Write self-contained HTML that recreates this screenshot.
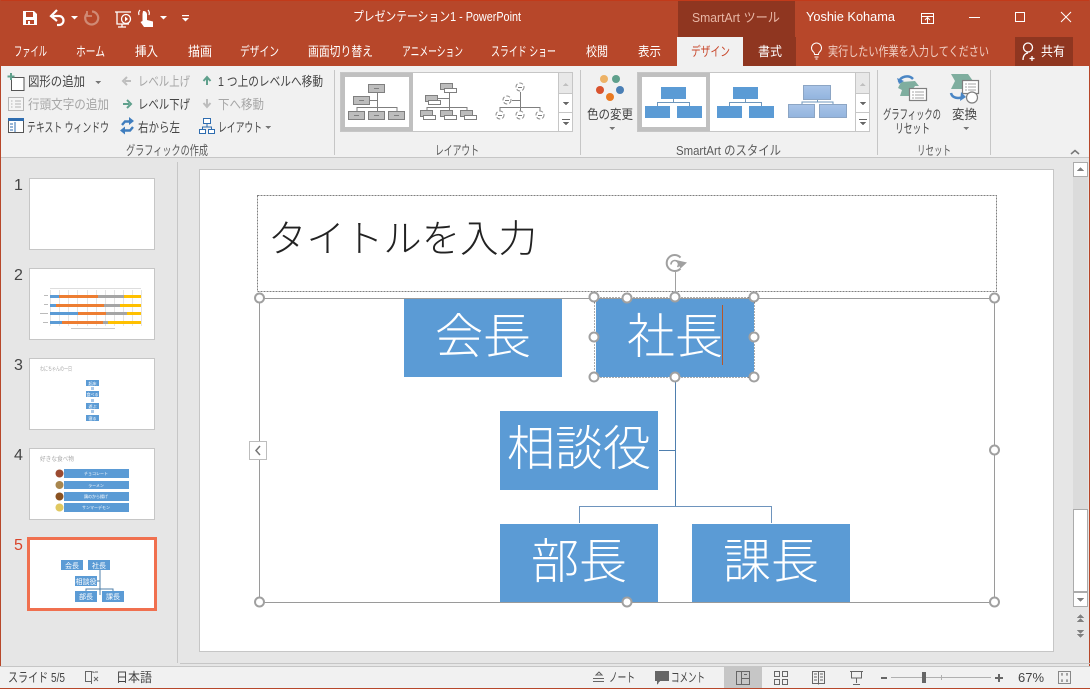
<!DOCTYPE html>
<html lang="ja"><head><meta charset="utf-8"><title>PowerPoint</title>
<style>
html,body{margin:0;padding:0;width:1090px;height:689px;overflow:hidden;background:#E6E6E6}
svg{display:block;position:absolute;left:0;top:0}
text{font-family:"Liberation Sans","Noto Sans CJK JP",sans-serif;font-size:13px;fill:#444;white-space:pre}
.w{fill:#fff}
.d{fill:#A6A6A6}
.bx{fill:#BDBDBD;stroke:#7F7F7F;stroke-width:1}
.wb{fill:#fff;stroke:#7F7F7F;stroke-width:1}
.ln{stroke:#7F7F7F;stroke-width:1;fill:none}
.s{fill:#5B9BD5}
.big{font-size:48px;fill:#fff;text-anchor:middle}
.h{fill:#fff;stroke:#A0A0A0;stroke-width:2}
.c{fill:none;stroke:#8C8C8C;stroke-width:1}
.tb{fill:#fff;stroke:#C6C6C6;stroke-width:1}
.n{font-size:16px;fill:#444}
.tiny{font-size:4px;fill:#fff;text-anchor:middle}
.g{fill:#808080}
.lb{fill:#5A5A5A}
</style></head><body>
<svg width="1090" height="689" viewBox="0 0 1090 689" xmlns="http://www.w3.org/2000/svg" shape-rendering="crispEdges">
<!-- base -->
<rect width="1090" height="689" fill="#E6E6E6"/>
<rect width="1090" height="66" fill="#B7472A"/>
<rect y="0" width="1090" height="1" fill="#C23A1A"/>
<rect y="66" width="1090" height="91" fill="#F1F1F1"/>
<rect y="157" width="1090" height="1" fill="#C6C6C6"/>
<rect x="0" y="0" width="1" height="689" fill="#B7472A"/>
<rect x="1089" y="0" width="1" height="689" fill="#B7472A"/>
<rect y="688" width="1090" height="1" fill="#B7472A"/>

<!-- title bar -->
<rect x="678" y="1" width="117" height="36" fill="#8F3620"/>
<g shape-rendering="auto">
<path fill="#fff" d="M23 11h11l3 3v11H23zM26 12v5h7v-5zM26 20v4h8v-4zM28 21h2v3h-2z" fill-rule="evenodd"/>
<path d="M53 16h6a4.500 4.500 0 0 1 0 9h-2" fill="none" stroke="#fff" stroke-width="2.200"/>
<path d="M57 10l-6 6 6 5" fill="none" stroke="#fff" stroke-width="2.200"/>
<path fill="#fff" d="M71 16h7l-3.500 3.500z"/>
<path d="M92 11.500a6.500 6.500 0 1 1-5 2" fill="none" stroke="#D08A75" stroke-width="2.200"/>
<path d="M87 11v5h5" fill="none" stroke="#D08A75" stroke-width="1.800"/>
<path d="M115 12h16M117 12v12h12M122 24v3M118 27h8" fill="none" stroke="#fff" stroke-width="1.300"/>
<circle cx="126" cy="19" r="4.500" fill="#B7472A" stroke="#fff" stroke-width="1.300"/>
<path fill="#fff" d="M125 16.500l3 2.500-3 2.500z"/>
<path fill="#fff" d="M143 11a3.500 3.500 0 0 1 4 3v6l6 1.500v5.500h-9l-3.500-5 2-1v-7z"/>
<path d="M139 15a5 5 0 0 1 1-5M149 15a5 5 0 0 0-1-5" fill="none" stroke="#fff" stroke-width="1.200"/>
<path fill="#fff" d="M160 16h7l-3.500 3.500z"/>
<rect x="182" y="15" width="7" height="1.200" fill="#fff"/>
<path fill="#fff" d="M182 18h7l-3.500 3.500z"/>
<path d="M921.500 13.500h12v10h-12zM921.500 16.500h12M927.500 23v-5M925 20l2.500-2.500 2.500 2.500" fill="none" stroke="#fff" stroke-width="1"/>
<path d="M1061 12l10 10M1071 12l-10 10" stroke="#fff" stroke-width="1" fill="none"/>
</g>
<rect x="969" y="17" width="11" height="1" fill="#fff"/>
<rect x="1015.500" y="12.500" width="9" height="9" fill="none" stroke="#fff"/>
<text class="w" x="353" y="21" textLength="168" lengthAdjust="spacingAndGlyphs">プレゼンテーション1 - PowerPoint</text>
<text x="692" y="22" textLength="88" lengthAdjust="spacingAndGlyphs" style="fill:#E8B7A6">SmartArt ツール</text>
<text class="w" x="806" y="21" textLength="89" lengthAdjust="spacingAndGlyphs">Yoshie Kohama</text>

<!-- tabs -->
<rect x="677" y="37" width="66" height="29" fill="#F1F1F1"/>
<rect x="743" y="37" width="53" height="29" fill="#8F3620"/>
<rect x="1015" y="37" width="58" height="29" fill="#8F3620"/>
<text class="w" x="14" y="56" textLength="33" lengthAdjust="spacingAndGlyphs">ファイル</text>
<text class="w" x="76" y="56" textLength="29" lengthAdjust="spacingAndGlyphs">ホーム</text>
<text class="w" x="135" y="56" textLength="23" lengthAdjust="spacingAndGlyphs">挿入</text>
<text class="w" x="188" y="56" textLength="24" lengthAdjust="spacingAndGlyphs">描画</text>
<text class="w" x="240" y="56" textLength="39" lengthAdjust="spacingAndGlyphs">デザイン</text>
<text class="w" x="308" y="56" textLength="65" lengthAdjust="spacingAndGlyphs">画面切り替え</text>
<text class="w" x="402" y="56" textLength="61" lengthAdjust="spacingAndGlyphs">アニメーション</text>
<text class="w" x="491" y="56" textLength="65" lengthAdjust="spacingAndGlyphs">スライド ショー</text>
<text class="w" x="586" y="56" textLength="22" lengthAdjust="spacingAndGlyphs">校閲</text>
<text class="w" x="638" y="56" textLength="23" lengthAdjust="spacingAndGlyphs">表示</text>
<text x="691" y="56" textLength="39" lengthAdjust="spacingAndGlyphs" style="fill:#C8462A">デザイン</text>
<text class="w" x="758" y="56" textLength="24" lengthAdjust="spacingAndGlyphs">書式</text>
<text x="828" y="56" textLength="161" lengthAdjust="spacingAndGlyphs" style="fill:#F0CFC4">実行したい作業を入力してください</text>
<text class="w" x="1041" y="56" textLength="24" lengthAdjust="spacingAndGlyphs">共有</text>
<g shape-rendering="auto" fill="none" stroke="#fff">
<path d="M813.500 52a5 5 0 1 1 6 0c-.8.7-1 1.500-1 2.500h-4c0-1-.2-1.800-1-2.500zM814.500 57h4M815.500 59h2"/>
<circle cx="1028" cy="47.500" r="4.500" stroke-width="1.300"/>
<path d="M1023 60c0-4 2-6.500 5-7M1032 56v5M1029.500 58.500h5" stroke-width="1.300"/>
</g>

<!-- group 1 -->
<g shape-rendering="auto">
<path d="M11.500 77.500h12.500v13H11.500z" fill="#fff" stroke="#555"/>
<path d="M11 73v7M7.500 76.500h7" stroke="#5FA08C" stroke-width="2"/>
<rect x="8.500" y="97.500" width="15" height="13" fill="#F5F5F5" stroke="#B5B5B5"/>
<path d="M11 101h1.500M11 104h1.500M11 107h1.500M15 101h6M15 104h6M15 107h6" stroke="#B5B5B5"/>
<rect x="8.500" y="119.500" width="15" height="13" fill="#fff" stroke="#555"/>
<rect x="8" y="118" width="16" height="3" fill="#2F6DB0"/>
<path d="M10 124h3M10 127h3M10 130h3M15 122v10" stroke="#2F6DB0"/>
<path d="M131 81h-6M127 77l-4 4 4 4" stroke="#BDBDBD" stroke-width="2" fill="none"/>
<path d="M123 104h6M127 100l4 4-4 4" stroke="#5FA08C" stroke-width="2" fill="none"/>
<path d="M122 125l3-3.500h6" stroke="#3F7DBE" stroke-width="2.400" fill="none"/>
<path d="M129 117l5 4-5 4z" fill="#3F7DBE"/>
<path d="M133 127l-3 3.500h-6" stroke="#3F7DBE" stroke-width="2.400" fill="none"/>
<path d="M125 126.500l-5 4 5 4z" fill="#3F7DBE"/>
<path d="M207 85v-7M203.500 81l3.500-4 3.500 4" stroke="#5FA08C" stroke-width="2" fill="none"/>
<path d="M207 99v7M203.500 103l3.500 4 3.500-4" stroke="#BDBDBD" stroke-width="2" fill="none"/>
</g>
<rect x="203.500" y="118.500" width="7" height="5" fill="#fff" stroke="#2F6DB0"/>
<rect x="199.500" y="129.500" width="6" height="4" fill="#fff" stroke="#2F6DB0"/>
<rect x="208.500" y="129.500" width="6" height="4" fill="#fff" stroke="#2F6DB0"/>
<path d="M207 124v3M202.500 129v-2h9v2" fill="none" stroke="#2F6DB0"/>
<text x="28" y="86" textLength="57" lengthAdjust="spacingAndGlyphs">図形の追加</text>
<path d="M95 81h6l-3 3z" fill="#777"/>
<text class="d" x="28" y="109" textLength="81" lengthAdjust="spacingAndGlyphs">行頭文字の追加</text>
<text x="27" y="132" textLength="82" lengthAdjust="spacingAndGlyphs">テキスト ウィンドウ</text>
<text class="d" x="138" y="86" textLength="52" lengthAdjust="spacingAndGlyphs">レベル上げ</text>
<text x="138" y="109" textLength="52" lengthAdjust="spacingAndGlyphs">レベル下げ</text>
<text x="138" y="132" textLength="42" lengthAdjust="spacingAndGlyphs">右から左</text>
<text x="218" y="86" textLength="105" lengthAdjust="spacingAndGlyphs">1 つ上のレベルへ移動</text>
<text class="d" x="218" y="109" textLength="46" lengthAdjust="spacingAndGlyphs">下へ移動</text>
<text x="218" y="132" textLength="44" lengthAdjust="spacingAndGlyphs">レイアウト</text>
<path d="M265 126h6l-3 3z" fill="#777"/>
<text class="lb" x="126" y="155" textLength="82" lengthAdjust="spacingAndGlyphs">グラフィックの作成</text>

<!-- separators -->
<rect x="334" y="70" width="1" height="85" fill="#C6C6C6"/>
<rect x="580" y="70" width="1" height="85" fill="#C6C6C6"/>
<rect x="877" y="70" width="1" height="85" fill="#C6C6C6"/>
<rect x="990" y="70" width="1" height="85" fill="#C6C6C6"/>

<!-- layout gallery -->
<rect x="340.500" y="72.500" width="232" height="59" fill="#fff" stroke="#C6C6C6"/>
<rect x="343" y="75" width="68" height="54" fill="#fff" stroke="#C0C0C0" stroke-width="4"/>
<path class="ln" d="M377.500 92v19M357 111v-3.500h40v3.500M370 100.500h7.500"/>
<rect class="bx" x="368.500" y="84.500" width="16" height="8"/>
<rect class="bx" x="353.500" y="96.500" width="16" height="8"/>
<rect class="bx" x="348.500" y="111.500" width="16" height="8"/>
<rect class="bx" x="368.500" y="111.500" width="16" height="8"/>
<rect class="bx" x="388.500" y="111.500" width="16" height="8"/>
<path class="ln" d="M374 88.500h5M359 100.500h5M354 115.500h5M374 115.500h5M394 115.500h5"/>
<path class="ln" d="M449.500 92v18M427 110v-2.500h40v2.500M438 98.500h11"/>
<rect class="bx" x="440.500" y="83.500" width="12" height="6"/><rect class="wb" x="444.500" y="88.500" width="12" height="4"/>
<rect class="bx" x="425.500" y="95.500" width="12" height="6"/><rect class="wb" x="428.500" y="100.500" width="12" height="4"/>
<rect class="bx" x="420.500" y="110.500" width="12" height="6"/><rect class="wb" x="423.500" y="115.500" width="12" height="4"/>
<rect class="bx" x="440.500" y="110.500" width="12" height="6"/><rect class="wb" x="444.500" y="115.500" width="12" height="4"/>
<rect class="bx" x="460.500" y="110.500" width="12" height="6"/><rect class="wb" x="464.500" y="115.500" width="12" height="4"/>
<path class="ln" d="M520.500 92v19M500 111v-3.500h40v3.500M512 100.500h8"/>
<g shape-rendering="auto">
<circle class="c" cx="520" cy="87" r="4" stroke-dasharray="4 2"/><circle class="c" cx="507" cy="100" r="4" stroke-dasharray="4 2"/>
<circle class="c" cx="500" cy="115" r="4" stroke-dasharray="4 2"/><circle class="c" cx="520" cy="115" r="4" stroke-dasharray="4 2"/><circle class="c" cx="540" cy="115" r="4" stroke-dasharray="4 2"/>
</g>
<path class="ln" d="M518 87.500h4M505 100.500h4M498 115.500h4M518 115.500h4M538 115.500h4"/>
<!-- scroll 1 -->
<rect x="558.500" y="72.500" width="14" height="59" fill="#fff" stroke="#C6C6C6"/>
<rect x="559" y="73" width="13" height="20" fill="#E8E8E8"/>
<path d="M558 93.500h15M558 112.500h15" stroke="#C6C6C6"/>
<path d="M562.500 86h6l-3-3z" fill="#C0C0C0"/>
<path d="M562.500 102h7l-3.500 3z" fill="#666"/>
<path d="M562 119.500h8" stroke="#666"/><path d="M562.500 122h7l-3.500 3z" fill="#666"/>
<text class="lb" x="435" y="155" textLength="44" lengthAdjust="spacingAndGlyphs">レイアウト</text>

<!-- color -->
<g shape-rendering="auto">
<circle cx="604" cy="79" r="4" fill="#EDB266"/><circle cx="616" cy="79" r="4" fill="#5FA08C"/>
<circle cx="600" cy="90" r="4" fill="#D9532F"/><circle cx="620" cy="90" r="4" fill="#4A7FB5"/>
<circle cx="610" cy="97" r="4" fill="#E97A22"/>
</g>
<text x="587" y="119" textLength="46" lengthAdjust="spacingAndGlyphs">色の変更</text>
<path d="M609 127h6l-3 3z" fill="#777"/>

<!-- style gallery -->
<rect x="637.500" y="72.500" width="232" height="59" fill="#fff" stroke="#C6C6C6"/>
<rect x="640" y="75" width="68" height="54" fill="#fff" stroke="#C0C0C0" stroke-width="4"/>
<path d="M673.500 99v4M657.500 106v-3.500h32v3.500" fill="none" stroke="#6F97BC"/>
<rect x="661" y="87" width="25" height="12" fill="#5B9BD5"/>
<rect x="645" y="106" width="25" height="12" fill="#5B9BD5"/>
<rect x="677" y="106" width="25" height="12" fill="#5B9BD5"/>
<path d="M745.500 99v4M729.500 106v-3.500h32v3.500" fill="none" stroke="#6F97BC"/>
<rect x="733" y="87" width="25" height="12" fill="#5B9BD5"/>
<rect x="717" y="106" width="25" height="12" fill="#5B9BD5"/>
<rect x="749" y="106" width="25" height="12" fill="#5B9BD5"/>
<defs><linearGradient id="gr" x1="0" y1="0" x2="0" y2="1"><stop offset="0" stop-color="#A9C4E8"/><stop offset="1" stop-color="#92B4DE"/></linearGradient></defs>
<path d="M817.500 100v2M802 104v-2h31v2" fill="none" stroke="#6F97BC"/>
<rect x="803.500" y="85.500" width="27" height="14" fill="url(#gr)" stroke="#8CA5C4"/>
<rect x="788.500" y="104.500" width="26" height="13" fill="url(#gr)" stroke="#8CA5C4"/>
<rect x="819.500" y="104.500" width="27" height="13" fill="url(#gr)" stroke="#8CA5C4"/>
<rect x="855.500" y="72.500" width="14" height="59" fill="#fff" stroke="#C6C6C6"/>
<rect x="856" y="73" width="13" height="20" fill="#E8E8E8"/>
<path d="M855 93.500h15M855 112.500h15" stroke="#C6C6C6"/>
<path d="M859.500 86h6l-3-3z" fill="#C0C0C0"/>
<path d="M859.500 102h7l-3.500 3z" fill="#666"/>
<path d="M859 119.500h8" stroke="#666"/><path d="M859.500 122h7l-3.500 3z" fill="#666"/>
<text class="lb" x="676" y="155" textLength="105" lengthAdjust="spacingAndGlyphs">SmartArt のスタイル</text>

<!-- reset group -->
<g shape-rendering="auto">
<path d="M898 88l3-6 14-1 4 5-4 0 0 0-2 3-3 0-1 7h-9l2-6z" fill="#7FAE9F"/>
<path d="M899 82a8 7 0 0 1 14-3" fill="none" stroke="#4A86C5" stroke-width="2.500"/>
<path d="M897 78l2 6 5-3z" fill="#4A86C5"/>
<rect x="909.500" y="88.500" width="17" height="12" fill="#fff" stroke="#7F7F7F" stroke-width="1.200"/>
<path d="M912 92h2M915 92h9M912 95h2M915 95h9M912 98h2M915 98h9" stroke="#A6A6A6"/>
<path d="M951 74h17l5 7-4 8h-18l4-8z" fill="#7FAE9F"/>
<rect x="962.500" y="80.500" width="16" height="13" fill="#fff" stroke="#7F7F7F" stroke-width="1.200"/>
<path d="M965 84h2M968 84h8M965 87h2M968 87h8M965 90h2M968 90h8" stroke="#A6A6A6"/>
<path d="M951 93c1 5 7 6 12 4" fill="none" stroke="#4A86C5" stroke-width="2.500"/>
<path d="M961 92l5 5-6 4z" fill="#4A86C5"/>
<circle cx="972" cy="97.500" r="5.500" fill="#fff" stroke="#7F7F7F" stroke-width="1.200"/>
</g>
<text x="883" y="119" textLength="58" lengthAdjust="spacingAndGlyphs">グラフィックの</text>
<text x="895" y="133" textLength="35" lengthAdjust="spacingAndGlyphs">リセット</text>
<text x="952" y="119" textLength="25" lengthAdjust="spacingAndGlyphs">変換</text>
<path d="M963 127h6l-3 3z" fill="#777"/>
<text class="lb" x="917" y="155" textLength="34" lengthAdjust="spacingAndGlyphs">リセット</text>
<path d="M1071 154l4-3.500 4 3.500" fill="none" stroke="#777" stroke-width="1.500" shape-rendering="auto"/>

<!-- thumbnail panel -->
<rect x="177" y="162" width="1" height="501" fill="#C6C6C6"/>
<rect x="180" y="663" width="910" height="1" fill="#C6C6C6"/>
<rect x="29.500" y="178.500" width="125" height="71" class="tb"/>
<rect x="29.500" y="268.500" width="125" height="71" class="tb"/>
<rect x="29.500" y="358.500" width="125" height="71" class="tb"/>
<rect x="29.500" y="448.500" width="125" height="71" class="tb"/>
<rect x="28.500" y="538.500" width="127" height="71" fill="#fff" stroke="#F0704F" stroke-width="3"/>
<text class="n" x="14" y="190">1</text>
<text class="n" x="14" y="280">2</text>
<text class="n" x="14" y="370">3</text>
<text class="n" x="14" y="460">4</text>
<text class="n" x="14" y="550" style="fill:#D9442A">5</text>

<!-- thumb 2 -->
<g fill="#E4E4E4"><rect x="50" y="290" width="1" height="36"/><rect x="59" y="290" width="1" height="36"/><rect x="68" y="290" width="1" height="36"/><rect x="77" y="290" width="1" height="36"/><rect x="87" y="290" width="1" height="36"/><rect x="96" y="290" width="1" height="36"/><rect x="105" y="290" width="1" height="36"/><rect x="114" y="290" width="1" height="36"/><rect x="123" y="290" width="1" height="36"/><rect x="132" y="290" width="1" height="36"/><rect x="141" y="290" width="1" height="36"/></g>
<rect x="50" y="295" width="9" height="3" fill="#5B9BD5"/><rect x="59" y="295" width="39" height="3" fill="#ED7D31"/><rect x="98" y="295" width="26" height="3" fill="#A5A5A5"/><rect x="124" y="295" width="17" height="3" fill="#FFC000"/>
<rect x="50" y="304" width="6" height="3" fill="#5B9BD5"/><rect x="56" y="304" width="48" height="3" fill="#ED7D31"/><rect x="104" y="304" width="16" height="3" fill="#A5A5A5"/><rect x="120" y="304" width="21" height="3" fill="#FFC000"/>
<rect x="50" y="312" width="28" height="3" fill="#5B9BD5"/><rect x="78" y="312" width="28" height="3" fill="#ED7D31"/><rect x="106" y="312" width="21" height="3" fill="#A5A5A5"/><rect x="127" y="312" width="14" height="3" fill="#FFC000"/>
<rect x="50" y="321" width="12" height="3" fill="#5B9BD5"/><rect x="62" y="321" width="41" height="3" fill="#ED7D31"/><rect x="103" y="321" width="5" height="3" fill="#A5A5A5"/><rect x="108" y="321" width="33" height="3" fill="#FFC000"/>
<rect x="71" y="328" width="44" height="1" fill="#C9C9C9"/>
<rect x="44" y="295" width="4" height="1" fill="#BBB"/><rect x="44" y="304" width="4" height="1" fill="#BBB"/><rect x="40" y="313" width="8" height="1" fill="#BBB"/><rect x="43" y="322" width="5" height="1" fill="#BBB"/>
<rect x="50" y="288" width="91" height="1" fill="#DDD"/>

<!-- thumb 3 -->
<text x="40" y="371" textLength="32" lengthAdjust="spacingAndGlyphs" style="font-size:6px;fill:#A8A8A8">わにちゃんの一日</text>
<rect x="86" y="380" width="13" height="6" class="s"/><rect x="86" y="391" width="13" height="6" class="s"/><rect x="86" y="403" width="13" height="6" class="s"/><rect x="86" y="415" width="13" height="6" class="s"/>
<g fill="#A9C8E8"><rect x="91" y="387" width="3" height="3"/><rect x="91" y="399" width="3" height="3"/><rect x="91" y="410" width="3" height="3"/></g>
<text class="tiny" x="92.500" y="385">起床</text><text class="tiny" x="92.500" y="396">食べる</text><text class="tiny" x="92.500" y="408">遊ぶ</text><text class="tiny" x="92.500" y="420">寝る</text>

<!-- thumb 4 -->
<text x="40" y="461" textLength="34" lengthAdjust="spacingAndGlyphs" style="font-size:6px;fill:#A8A8A8">好きな食べ物</text>
<rect x="64" y="469" width="65" height="9" class="s"/><rect x="64" y="481" width="65" height="8" class="s"/><rect x="64" y="492" width="65" height="9" class="s"/><rect x="64" y="503" width="65" height="9" class="s"/>
<text class="tiny" x="96" y="475">チョコレート</text><text class="tiny" x="96" y="487">ラーメン</text><text class="tiny" x="96" y="498">鶏のから揚げ</text><text class="tiny" x="96" y="509">サンマーデモン</text>
<g shape-rendering="auto"><circle cx="59.500" cy="473.500" r="4" fill="#9B4A30"/><circle cx="59.500" cy="485" r="4" fill="#A8864E"/><circle cx="59.500" cy="496.500" r="4" fill="#8A5220"/><circle cx="59.500" cy="507.500" r="4" fill="#E0C860"/></g>

<!-- thumb 5 -->
<rect x="61" y="560" width="22" height="10" class="s"/><rect x="88" y="560" width="22" height="10" class="s"/>
<rect x="75" y="576" width="22" height="10" class="s"/><rect x="75" y="591" width="22" height="11" class="s"/><rect x="102" y="591" width="22" height="11" class="s"/>
<path d="M100 570v25M97 581h3M86 591v-2h27v2" fill="none" stroke="#4F7FA8"/>
<text x="72" y="568" text-anchor="middle" style="font-size:7px;fill:#fff">会長</text>
<text x="99" y="568" text-anchor="middle" style="font-size:7px;fill:#fff">社長</text>
<text x="86" y="584" text-anchor="middle" style="font-size:7px;fill:#fff">相談役</text>
<text x="86" y="599" text-anchor="middle" style="font-size:7px;fill:#fff">部長</text>
<text x="113" y="599" text-anchor="middle" style="font-size:7px;fill:#fff">課長</text>

<!-- slide -->
<rect x="199.500" y="169.500" width="854" height="482" fill="#fff" stroke="#C6C6C6"/>
<rect x="257.500" y="195.500" width="739" height="96" fill="none" stroke="#7F7F7F" stroke-dasharray="2 1"/>
<text x="268" y="252" textLength="269" lengthAdjust="spacingAndGlyphs" style="font-size:38px;font-weight:300;fill:#222">タイトルを入力</text>

<rect x="259.500" y="298.500" width="735" height="304" fill="none" stroke="#9A9A9A"/>
<rect x="404" y="299" width="158" height="78" class="s"/>
<rect x="596" y="299" width="158" height="78" class="s"/>
<rect x="500" y="411" width="158" height="79" class="s"/>
<rect x="500" y="524" width="158" height="78" class="s"/>
<rect x="692" y="524" width="158" height="78" class="s"/>
<path d="M675.500 377v130M659 450.500h16.500" fill="none" stroke="#4F7FAE"/>
<path d="M579.500 523v-16.500h192v16.500" fill="none" stroke="#6E94BD"/>
<text class="big" x="483" y="353" style="font-weight:300">会長</text>
<text class="big" x="675" y="353" style="font-weight:300">社長</text>
<text class="big" x="579" y="465" style="font-weight:300">相談役</text>
<text class="big" x="579" y="578" style="font-weight:300">部長</text>
<text class="big" x="771" y="578" style="font-weight:300">課長</text>
<rect x="722" y="305" width="1" height="60" fill="#B7572A"/>
<rect x="594.500" y="297.500" width="160" height="80" fill="none" stroke="#fff"/>
<rect x="594.500" y="297.500" width="160" height="80" fill="none" stroke="#5A5A5A" stroke-dasharray="1 2"/>
<rect x="675" y="272" width="1" height="25" fill="#A0A0A0"/>

<g shape-rendering="auto">
<path d="M680.500 257.500a8 8 0 1 0 0 11" fill="none" stroke="#A0A0A0" stroke-width="2"/>
<path d="M671 264.500a3.800 3.800 0 1 1 6.500 2.500" fill="none" stroke="#A0A0A0" stroke-width="1.600"/>
<path d="M676 260l11 2.500-6.500 6z" fill="#A0A0A0"/>
<circle class="h" cx="259.500" cy="298" r="4.500"/><circle class="h" cx="994.500" cy="298" r="4.500"/>
<circle class="h" cx="994.500" cy="450" r="4.500"/>
<circle class="h" cx="259.500" cy="602" r="4.500"/><circle class="h" cx="627" cy="602" r="4.500"/><circle class="h" cx="994.500" cy="602" r="4.500"/>
<circle class="h" cx="594" cy="297" r="4.500"/><circle class="h" cx="627" cy="298" r="4.500"/><circle class="h" cx="675" cy="297" r="4.500"/><circle class="h" cx="754" cy="297" r="4.500"/>
<circle class="h" cx="594" cy="337" r="4.500"/><circle class="h" cx="754" cy="337" r="4.500"/>
<circle class="h" cx="594" cy="377" r="4.500"/><circle class="h" cx="675" cy="377" r="4.500"/><circle class="h" cx="754" cy="377" r="4.500"/>
</g>
<rect x="249.500" y="441.500" width="17" height="18" fill="#fff" stroke="#BDBDBD"/>
<path d="M260 446l-4 4.500 4 4.500" fill="none" stroke="#777" stroke-width="1.500" shape-rendering="auto"/>

<!-- scrollbar -->
<rect x="1073" y="162" width="15" height="445" fill="#DBDBDB"/>
<rect x="1073.500" y="162.500" width="14" height="14" fill="#fff" stroke="#ABABAB"/>
<rect x="1073.500" y="509.500" width="14" height="82" fill="#fff" stroke="#ABABAB"/>
<rect x="1073.500" y="592.500" width="14" height="14" fill="#fff" stroke="#ABABAB"/>
<path class="g" d="M1077 171h7l-3.500-4z"/>
<path class="g" d="M1077 598h7l-3.500 4z"/>
<path class="g" d="M1077 618h7l-3.500-4zM1077 622h7l-3.500-4z"/>
<path class="g" d="M1077 630h7l-3.500 4zM1077 634h7l-3.500 4z"/>

<!-- status bar -->
<rect y="667" width="1090" height="21" fill="#F1F1F1"/>
<rect y="666" width="1090" height="1" fill="#C6C6C6"/>
<rect x="724" y="667" width="38" height="21" fill="#C6C6C6"/>
<text x="8" y="682" textLength="57" lengthAdjust="spacingAndGlyphs">スライド 5/5</text>
<text x="116" y="682" textLength="36" lengthAdjust="spacingAndGlyphs">日本語</text>
<path d="M85.500 671.500h6v10h-6zM91.500 671.500l3 1M91.500 671v13M94 677l4 4M98 677l-4 4M95 672h3" fill="none" stroke="#666" shape-rendering="auto"/>
<path d="M596 675l3-3 3 3zM593 678.500h11M593 681.500h11" fill="none" stroke="#666"/>
<text x="609" y="682" textLength="26" lengthAdjust="spacingAndGlyphs">ノート</text>
<path d="M655 671h14v10h-9l-3 4v-4h-2z" fill="#666"/>
<text x="671" y="682" textLength="34" lengthAdjust="spacingAndGlyphs">コメント</text>
<path d="M736.500 671.500h13v13h-13zM741.500 671.500v13M741.500 678.500h8M744 674.500h3" fill="none" stroke="#666"/>
<path d="M774.500 671.500h5v5h-5zM782.500 671.500h5v5h-5zM774.500 679.500h5v5h-5zM782.500 679.500h5v5h-5z" fill="none" stroke="#666"/>
<path d="M812.500 671.500h12v12h-12zM818.500 671.500v13M814 674h3M814 677h3M814 680h3M820 674h3M820 677h3M820 680h3" fill="none" stroke="#666"/>
<path d="M850 671.500h13M851.500 672v6h10v-6M856.500 678v5M853 684.500h7" fill="none" stroke="#666"/>
<rect x="881" y="677" width="6" height="2" fill="#666"/>
<rect x="891" y="677" width="100" height="1" fill="#B0B0B0"/>
<rect x="941" y="675" width="1" height="5" fill="#B0B0B0"/>
<rect x="922" y="672" width="4" height="11" fill="#666"/>
<path d="M995 677h8v2h-8zM998 674h2v8h-2z" fill="#666"/>
<text x="1018" y="682" textLength="26" lengthAdjust="spacingAndGlyphs">67%</text>
<rect x="1058.500" y="671.500" width="12" height="12" fill="none" stroke="#888"/>
<path d="M1061 674h2M1066 674h2M1061 681h2M1066 681h2M1062 673v3M1067 673v3M1062 679v3M1067 679v3" stroke="#888" fill="none"/>
</svg>
</body></html>
